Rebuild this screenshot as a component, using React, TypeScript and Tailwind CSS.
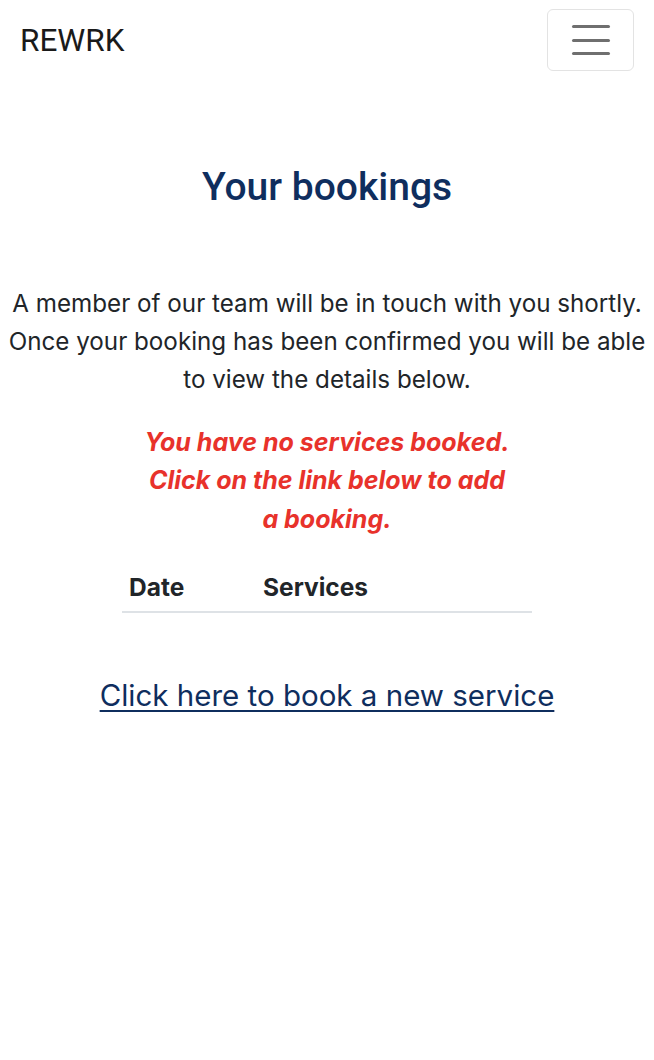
export default function App() {
  return (
    <div className="min-h-[1060px] bg-white font-['Inter',sans-serif] text-[#212529]">
      <nav className="flex items-center justify-between pl-5 pr-5 pt-[9px] pb-[9px]">
        <a className="mt-[2px] font-['Roboto',sans-serif] text-[31.5px] text-[#1a1a1a]">REWRK</a>
        <button className="flex h-[62px] w-[87px] flex-col items-center justify-center gap-[10.5px] rounded-md border border-[#e3e3e3] bg-white">
          <span className="block h-[3px] w-[38px] rounded-sm bg-[#6f6f6f]" />
          <span className="block h-[3px] w-[38px] rounded-sm bg-[#6f6f6f]" />
          <span className="block h-[3px] w-[38px] rounded-sm bg-[#6f6f6f]" />
        </button>
      </nav>

      <main className="flex flex-col items-center px-2 text-center">
        <h1 className="mt-[78px] font-['Roboto',sans-serif] text-[39px] font-medium text-[#0f2e5e]">Your bookings</h1>

        <p className="mt-[68px] text-[24.2px] leading-[38px]">
          A member of our team will be in touch with you shortly. Once your booking has been confirmed you will be able to view the details below.
        </p>

        <p className="mt-6 max-w-[370px] text-[25px] font-bold italic leading-[38.5px] text-[#e8322b]">
          You have no services booked. Click on the link below to add a booking.
        </p>

        <table className="mt-[23px] w-[410px] text-left text-[24.5px]">
          <thead>
            <tr className="border-b-2 border-[#dee2e6]">
              <th className="w-[134px] px-[7px] pb-[5px] pt-[8px] font-bold">Date</th>
              <th className="px-[7px] pb-[5px] pt-[8px] font-bold">Services</th>
            </tr>
          </thead>
        </table>

        <a href="#" className="mt-[60px] text-[29.5px] text-[#0f2e5e] underline decoration-2 underline-offset-4">
          Click here to book a new service
        </a>
      </main>
    </div>
  );
}
